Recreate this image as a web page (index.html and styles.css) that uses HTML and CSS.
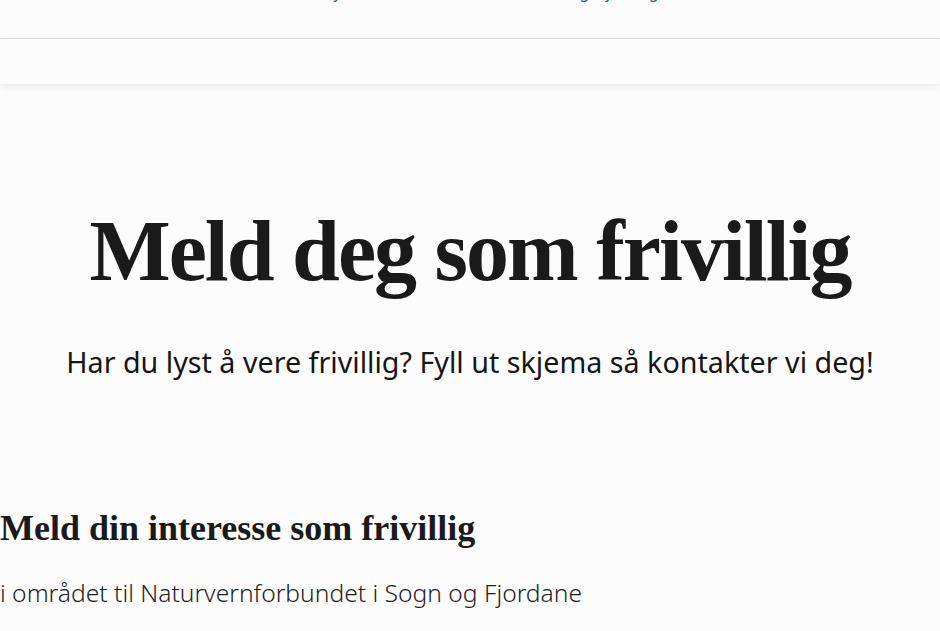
FILE: index.html
```html
<!DOCTYPE html>
<html lang="nn">
<head>
<meta charset="utf-8">
<title>Meld deg som frivillig</title>
<link rel="stylesheet" href="styles.css">
</head>
<body>
<header class="site-header">
  <div class="topbar">
    <nav class="topnav">
      <a class="nav-item" href="#">Nyheiter</a>
      <a class="nav-item" href="#">Engasjer deg</a>
    </nav>
  </div>
  <div class="subbar"></div>
</header>
<main class="page">
  <section class="hero">
    <h1 class="hero-title">Meld deg som frivillig</h1>
    <p class="hero-lead">Har du lyst å vere frivillig? Fyll ut skjema så kontakter vi deg!</p>
  </section>
  <section class="form-intro">
    <h2 class="section-title">Meld din interesse som frivillig</h2>
    <p class="section-text">i området til Naturvernforbundet i Sogn og Fjordane</p>
  </section>
</main>
</body>
</html>
```
FILE: styles.css
```css
html, body {
  margin: 0;
  padding: 0;
}
body {
  background: #fcfcfc;
  color: #1a1a1a;
  font-family: "Noto Sans", "Open Sans", sans-serif;
  overflow: hidden;
}
.site-header {
  background: #fcfcfc;
}
.topbar {
  height: 38px;
  border-bottom: 1px solid #dedede;
  overflow: hidden;
}
.topnav {
  display: flex;
  gap: 175px;
  padding-left: 321px;
  margin-top: -16px;
  font-size: 16px;
  line-height: 16px;
}
.nav-item {
  color: #2e5f88;
  text-decoration: none;
}
.subbar {
  height: 45px;
  background: #fcfcfc;
  box-shadow: 0 3px 8px rgba(0, 0, 0, 0.07);
  position: relative;
}
.page {
  padding-top: 127px;
}
.hero {
  text-align: center;
}
.hero-title {
  margin: 0;
  font-family: "Liberation Serif", serif;
  font-weight: 700;
  font-size: 86px;
  line-height: 80px;
  letter-spacing: -2px;
  color: #1a1a1a;
}
.hero-lead {
  margin: 53px 0 0;
  font-size: 28.7px;
  line-height: 36px;
  color: #161616;
}
.form-intro {
  margin-top: 129px;
}
.section-title {
  margin: 0;
  font-family: "Liberation Serif", serif;
  font-weight: 700;
  font-size: 36px;
  line-height: 38px;
  letter-spacing: 0;
  color: #1a1a1a;
}
.section-text {
  margin: 31px 0 0;
  font-size: 24.6px;
  line-height: 30px;
  font-weight: 300;
  color: #1f1f1f;
}
```
